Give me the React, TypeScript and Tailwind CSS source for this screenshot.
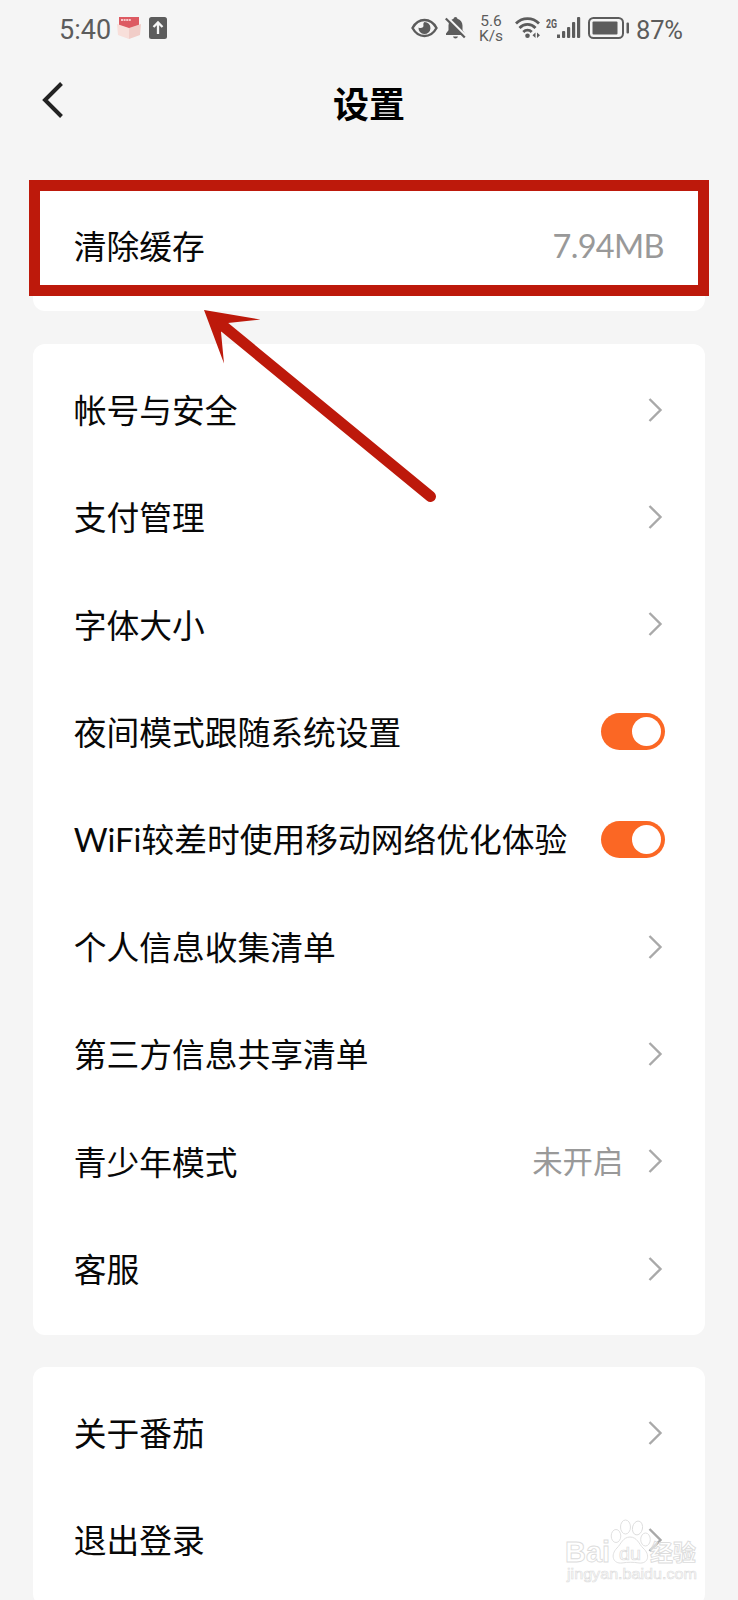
import { useState } from 'react';

type Item = {
  label: string;
  value?: string;
  kind: 'link' | 'toggle' | 'value';
};

const groups: Item[][] = [
  [{ label: '清除缓存', value: '7.94MB', kind: 'value' }],
  [
    { label: '帐号与安全', kind: 'link' },
    { label: '支付管理', kind: 'link' },
    { label: '字体大小', kind: 'link' },
    { label: '夜间模式跟随系统设置', kind: 'toggle' },
    { label: 'WiFi较差时使用移动网络优化体验', kind: 'toggle' },
    { label: '个人信息收集清单', kind: 'link' },
    { label: '第三方信息共享清单', kind: 'link' },
    { label: '青少年模式', value: '未开启', kind: 'link' },
    { label: '客服', kind: 'link' },
  ],
  [
    { label: '关于番茄', kind: 'link' },
    { label: '退出登录', kind: 'link' },
  ],
];

export default function App() {
  return (
    <main className="relative h-[1600px] w-[738px] overflow-hidden bg-[#f5f5f5] font-['Lato','Noto_Sans_CJK_SC',sans-serif] text-[#080808]">
      <StatusBar />

      <header className="grid h-[124px] grid-cols-[1fr_auto_1fr] items-start pt-[26px]">
        <button aria-label="返回" className="ml-[42px] w-6">
          <svg width="24" height="36" viewBox="0 0 24 36" fill="none">
            <path d="M19.5 1.5 3 18l16.5 16.5" stroke="#222" strokeWidth="4" />
          </svg>
        </button>
        <h1 className="pt-1 text-[36px] leading-[36px] font-bold text-black">设置</h1>
      </header>

      <div className="flex flex-col gap-[32.6px] px-[32.7px]">
        {groups.map((items, i) => (
          <section key={i} className="rounded-xl bg-white py-3">
            {items.map((item) => (
              <Row key={item.label} item={item} />
            ))}
          </section>
        ))}
      </div>

      <Watermark />
      <Callout />
    </main>
  );
}

function Row({ item }: { item: Item }) {
  return (
    <div className="flex h-[107.4px] items-center justify-between pr-[40.5px] pl-[41px]">
      <span className="pt-[3px] text-[32.75px] leading-none whitespace-nowrap">{item.label}</span>
      {item.kind === 'toggle' && <Toggle label={item.label} />}
      {item.kind === 'value' && (
        <span className="pt-px pr-px text-[32.5px] leading-none tracking-[-0.7px] text-[#999]">
          {item.value}
        </span>
      )}
      {item.kind === 'link' && (
        <div className="flex items-center gap-[25px] pr-[1.5px]">
          {item.value && (
            <span className="text-[30.4px] leading-none text-[#999]">{item.value}</span>
          )}
          <svg width="15" height="26" viewBox="0 0 15 26" fill="none">
            <path d="M1.5 2l11 11-11 11" stroke="#a9a9a9" strokeWidth="2.4" />
          </svg>
        </div>
      )}
    </div>
  );
}

function Toggle({ label }: { label: string }) {
  const [on, setOn] = useState(true);

  return (
    <button
      role="switch"
      aria-checked={on}
      aria-label={label}
      onClick={() => setOn(!on)}
      className={`flex h-[37px] w-16 items-center rounded-full px-1 ${on ? 'justify-end bg-[#fb6724]' : 'justify-start bg-[#ddd]'}`}
    >
      <span className="size-[29px] rounded-full bg-white" />
    </button>
  );
}

function StatusBar() {
  return (
    <div className="flex h-14 items-center pl-[59px] font-[Roboto,sans-serif] text-[#5c5c5c]">
      <span className="w-[58px] pt-[5px] text-[27px] leading-none">5:40</span>

      <svg width="24" height="22" viewBox="0 0 24 22">
        <path d="M2 0h20v10l-10 3L2 9z" fill="#dd5a62" />
        <path d="M4 3h10" stroke="#f6c6c8" strokeWidth="2" strokeDasharray="2 .6" />
        <path d="M0 7l12 4v11L1 18z" fill="#f8dfda" />
        <path d="M24 7l-12 4v11l11-4z" fill="#f1cdc8" />
      </svg>

      <svg className="ml-2" width="18" height="22" viewBox="0 0 18 22">
        <rect width="18" height="22" rx="2.5" fill="#5c5c5c" />
        <path d="M9 17V6M4.5 10 9 5.5l4.5 4.5" stroke="#f5f5f5" strokeWidth="2.3" fill="none" />
      </svg>

      <svg className="ml-[244px]" width="27" height="20" viewBox="0 0 27 20">
        <path
          d="M1.5 10c3-5.500 7-8 12-8s9 2.500 12 8c-3 5.500-7 8-12 8s-9-2.500-12-8z"
          fill="none"
          stroke="currentColor"
          strokeWidth="2.4"
        />
        <path
          d="M13.5 4A6 6 0 1 1 7.500 9.500c2.400 1.400 5.700 0 4.900-2.800-.2-1 .2-2.100 1.100-2.700z"
          fill="currentColor"
        />
      </svg>

      <svg className="ml-[7px]" width="21" height="22" viewBox="0 0 21 22">
        <path
          d="M10.5 0c1.100 0 1.800.7 1.900 1.800C15.500 2.700 17.500 5.300 17.500 8.500v4.800l2.300 3.200V18H1v-1.500l2.500-3.200V8.500c0-3.200 2-5.800 5.100-6.700C8.700.7 9.400 0 10.500 0zM8 19.500h5c-.4 1.300-1.300 2-2.500 2s-2.100-.7-2.500-2z"
          fill="currentColor"
        />
        <path d="M2 0l19 19" stroke="#f5f5f5" strokeWidth="2.4" />
        <path d="M.8 1.500l19 19" stroke="currentColor" strokeWidth="2.2" />
      </svg>

      <div className="ml-3 flex w-[26px] flex-col items-center gap-px text-[15.5px] leading-[14px]">
        <span className="h-[14px]">5.6</span>
        <span className="h-[14px]">K/s</span>
      </div>

      <svg className="ml-[11px]" width="26" height="22" viewBox="0 0 26 22">
        <g fill="none" stroke="currentColor" strokeWidth="2.8">
          <path d="M1 6.500c6.500-6.500 16.500-6.500 23 0" />
          <path d="M4.500 11c4.500-4.800 11.500-4.800 16 0" />
          <path d="M8.300 15c2.500-2.500 6-2.500 8.400 0" />
        </g>
        <circle cx="12.5" cy="18.8" r="2.3" fill="currentColor" />
        <path d="M20.500 15.500v5.500l-3-2.700zM22 15.500v5.500l3-2.700z" fill="currentColor" />
      </svg>

      {/* network type sits at the top left of the signal bars */}
      <div className="ml-[5px] flex items-start">
        <span className="mr-[-4px] h-[22px] w-[15px] origin-left scale-x-[0.68] text-[13px] leading-[13px] font-bold">
          2G
        </span>
        <svg width="24" height="22" viewBox="0 0 24 22" fill="currentColor">
          <rect x="0" y="17.5" width="3" height="3.5" />
          <rect x="5" y="14" width="3.2" height="7" rx="1" />
          <rect x="10" y="10" width="3.2" height="11" rx="1" />
          <rect x="15" y="5" width="3.2" height="16" rx="1" />
          <rect x="20" y="0" width="3.2" height="21" rx="1" />
        </svg>
      </div>

      <svg className="ml-[7px]" width="42" height="22" viewBox="0 0 42 22">
        <rect x="1" y="1" width="34" height="20" rx="4.5" fill="none" stroke="currentColor" strokeWidth="2" />
        <rect x="4.5" y="4.5" width="25" height="13" rx="1" fill="currentColor" />
        <rect x="38.5" y="5.5" width="2.5" height="11" rx="1" fill="currentColor" />
      </svg>

      <span className="ml-[6px] pt-[5px] text-[25.5px] leading-none tracking-[-0.2px]">87%</span>
    </div>
  );
}

function Watermark() {
  return (
    <svg
      className="absolute top-[1515px] left-[562px]"
      width="140"
      height="75"
      viewBox="0 0 140 75"
      fill="#fff"
      fillOpacity=".55"
      stroke="#dcdcdc"
      strokeWidth=".9"
    >
      <text x="3" y="47" fontSize="30" fontWeight="700" fontFamily="Liberation Sans" textLength="45" lengthAdjust="spacingAndGlyphs">
        Bai
      </text>
      <ellipse cx="54" cy="21" rx="4.8" ry="6.5" />
      <ellipse cx="63.5" cy="12" rx="5" ry="7" />
      <ellipse cx="75.5" cy="13" rx="5" ry="7" transform="rotate(12 75.5 13)" />
      <ellipse cx="83.5" cy="24.5" rx="4.8" ry="6.5" />
      <path d="M68 22c7 0 9 7 13 11 8 7 5 16-4 15-6-1-11-1-17 0-9 1-12-8-5-15 4-4 6-11 13-11z" />
      <text x="57" y="45" fontSize="19" fontFamily="Liberation Sans" strokeWidth=".7" textLength="22" lengthAdjust="spacingAndGlyphs">
        du
      </text>
      <text x="88" y="46" fontSize="23" fontWeight="700" fontFamily="Noto Sans CJK SC">
        经验
      </text>
      <text x="5" y="64" fontSize="15" fontFamily="Liberation Sans" strokeWidth=".6" textLength="130" lengthAdjust="spacingAndGlyphs">
        jingyan.baidu.com
      </text>
    </svg>
  );
}

function Callout() {
  return (
    <>
      <div className="absolute top-[180px] left-[29px] h-[116px] w-[680px] border-[11px] border-[#bd190b]" />
      <svg
        className="absolute top-[300px] left-[190px]"
        width="260"
        height="210"
        viewBox="190 300 260 210"
        fill="#bd190b"
      >
        <path d="M204 310l56.500 9.500-32.500 3.500-7 9 3 31.500z" />
        <path d="M222 325L430.500 496.500" stroke="#bd190b" strokeWidth="11" strokeLinecap="round" />
      </svg>
    </>
  );
}
